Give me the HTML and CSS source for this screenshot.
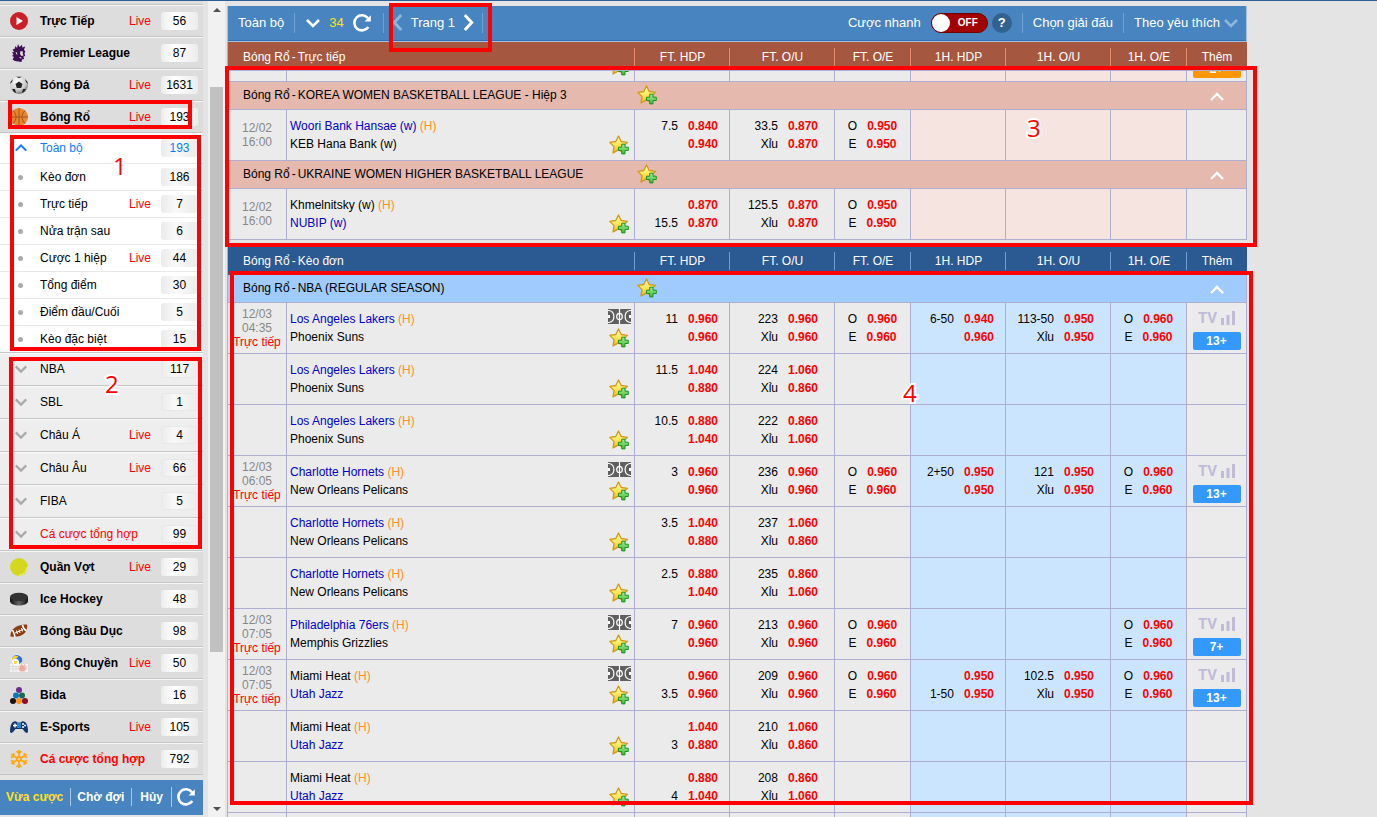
FILE: index.html
```html
<!DOCTYPE html>
<html lang="vi">
<head>
<meta charset="utf-8">
<meta name="viewport" content="width=device-width, initial-scale=1">
<title>Bóng Rổ</title>
<link rel="stylesheet" href="styles.css">
</head>
<body>
<svg class="defs" aria-hidden="true">
  <defs>
    <linearGradient id="gold" x1="0" y1="0" x2="0" y2="1"><stop offset="0" stop-color="#fffbd0"/><stop offset=".5" stop-color="#ffe65a"/><stop offset="1" stop-color="#f0b41c"/></linearGradient>
    <linearGradient id="leaf" x1="0" y1="0" x2="0" y2="1"><stop offset="0" stop-color="#a5ee94"/><stop offset="1" stop-color="#3fb83a"/></linearGradient>
    <linearGradient id="puck" x1="0" y1="0" x2="1" y2="0"><stop offset="0" stop-color="#111"/><stop offset=".5" stop-color="#666"/><stop offset="1" stop-color="#111"/></linearGradient>
    <radialGradient id="ball" cx=".4" cy=".3" r=".7"><stop offset="0" stop-color="#fff"/><stop offset=".7" stop-color="#ccc"/><stop offset="1" stop-color="#777"/></radialGradient>
  </defs>
  <symbol id="star" viewBox="0 0 20 20"><path d="M9.500 1l2.700 5.500 6.300.8-4.600 4.300 1 6.200-5.400-2.900L4 18l1-6.400L.8 7.400l6-.9z" fill="url(#gold)" stroke="#cf9a1c" stroke-width="1.300" stroke-linejoin="round"/><path d="M12.700 9.200h3.300v3h3.300v3.300H16v3.400h-3.300v-3.400H9.500v-3.300h3.200z" fill="url(#leaf)" stroke="#1f9226"/></symbol>
  <symbol id="court" viewBox="0 0 23 15"><path d="M0 0h23v15H0z" fill="#5f5f5f"/><g fill="none" stroke="#fff" stroke-width="1.200"><path d="M11.500 0v15M0 1.500h1c6.500 1 6.500 11 0 12H0M23 1.500h-1c-6.500 1-6.500 11 0 12h1"/><ellipse cx="11.500" cy="7.500" rx="2.800" ry="3.200"/></g><path d="M0 6h2v3H0zM21 6h2v3h-2z" fill="#fff"/></symbol>
  <symbol id="down" viewBox="0 0 16 10"><path d="M2 2l6 6 6-6" fill="none" stroke="currentColor" stroke-width="2.600"/></symbol>
  <symbol id="up" viewBox="0 0 16 10"><path d="M2 8l6-6 6 6" fill="none" stroke="currentColor" stroke-width="2.400"/></symbol>
  <symbol id="refresh" viewBox="0 0 20 20"><path d="M16 5.200A7.600 7.600 0 1 0 16.300 14" fill="none" stroke="currentColor" stroke-width="2.600"/><path d="M18.800 2.200v6.300h-6.300z" fill="currentColor"/></symbol>
  <symbol id="bars" viewBox="0 0 14 14"><path d="M0 7h3v7H0zM5.500 4h3v10h-3zM11 0h3v14h-3z" fill="currentColor"/></symbol>
</svg>

<div class="app">
  <aside class="sidebar">
    <nav class="menu">
      <a class="sport" href="#"><svg viewBox="0 0 18 18"><circle cx="9" cy="9" r="9" fill="#cb1f27"/><path d="M6.500 5l6.500 4-6.500 4z" fill="#fff"/></svg><span class="name">Trực Tiếp</span><span class="live">Live</span><span class="count">56</span></a>
      <a class="sport" href="#"><svg viewBox="0 0 18 18"><path d="M4.500 5l1-3 1.500 2L8 0l1.500 3L12 .8l.3 2.700 3-1L14 5.500l1.200 2-.7 2 .7 2.500-1.700.5.500 2.500-2 .5-.5 2.500L5 17l-2.500-1.500L4 13l-2-1 1.500-1.500L2 8.500 4 8 2.500 5.500z" fill="#3c1053"/><path d="M10.500 7l2.500.5-.3 2 .8 2-2 .5-1.500-2z" fill="#ddd"/><path d="M6 8l1 2.500M9.500 13.500l2 .5" stroke="#ddd"/></svg><span class="name">Premier League</span><span class="count">87</span></a>
      <a class="sport" href="#"><svg viewBox="0 0 18 18"><circle cx="9" cy="9" r="9" fill="url(#ball)"/><path d="M9 5.500l3.500 2.500-1.300 4H6.800L5.500 8zM6 .7L9 2l3-1.300zM0 8l2-2L3 3 .8 5.500zM18 8l-2-2-1-3 2.200 2.500zM2 13l3 0 1 4-2-1zM16 13l-3 0-1 4 2-1z" fill="#222"/></svg><span class="name">Bóng Đá</span><span class="live">Live</span><span class="count">1631</span></a>
      <a class="sport" href="#"><svg viewBox="0 0 18 18"><circle cx="9" cy="9" r="9" fill="#e8852f"/><path d="M9 0v18M0 9h18M3 2.500c4 4 4 9 0 13M15 2.500c-4 4-4 9 0 13" fill="none" stroke="#a4541a"/></svg><span class="name">Bóng Rổ</span><span class="live">Live</span><span class="count">193</span></a>

      <div class="bets">
        <a class="bet bet-all" href="#"><svg><use href="#up"/></svg><span class="name">Toàn bộ</span><span class="count">193</span></a>
        <a class="bet" href="#"><i class="dot"></i><span class="name">Kèo đơn</span><span class="count">186</span></a>
        <a class="bet" href="#"><i class="dot"></i><span class="name">Trực tiếp</span><span class="live">Live</span><span class="count">7</span></a>
        <a class="bet" href="#"><i class="dot"></i><span class="name">Nửa trận sau</span><span class="count">6</span></a>
        <a class="bet" href="#"><i class="dot"></i><span class="name">Cược 1 hiệp</span><span class="live">Live</span><span class="count">44</span></a>
        <a class="bet" href="#"><i class="dot"></i><span class="name">Tổng điểm</span><span class="count">30</span></a>
        <a class="bet" href="#"><i class="dot"></i><span class="name">Điểm đầu/Cuối</span><span class="count">5</span></a>
        <a class="bet" href="#"><i class="dot"></i><span class="name">Kèo đặc biệt</span><span class="count">15</span></a>
      </div>

      <a class="league-link" href="#"><svg><use href="#down"/></svg><span class="name">NBA</span><span class="count">117</span></a>
      <a class="league-link" href="#"><svg><use href="#down"/></svg><span class="name">SBL</span><span class="count">1</span></a>
      <a class="league-link" href="#"><svg><use href="#down"/></svg><span class="name">Châu Á</span><span class="live">Live</span><span class="count">4</span></a>
      <a class="league-link" href="#"><svg><use href="#down"/></svg><span class="name">Châu Âu</span><span class="live">Live</span><span class="count">66</span></a>
      <a class="league-link" href="#"><svg><use href="#down"/></svg><span class="name">FIBA</span><span class="count">5</span></a>
      <a class="league-link parlay" href="#"><svg><use href="#down"/></svg><span class="name">Cá cược tổng hợp</span><span class="count">99</span></a>

      <a class="sport" href="#"><svg viewBox="0 0 18 18"><circle cx="9" cy="9" r="9" fill="#d3d81d"/><path d="M17.500 9c-1 4.500-4 7.500-8.500 8.500" fill="none" stroke="#f2f4a0"/></svg><span class="name">Quần Vợt</span><span class="live">Live</span><span class="count">29</span></a>
      <a class="sport" href="#"><svg viewBox="0 0 18 18"><path d="M0 7v4c0 6 18 6 18 0V7z" fill="url(#puck)"/><ellipse cx="9" cy="7" rx="9" ry="4.200" fill="#333"/></svg><span class="name">Ice Hockey</span><span class="count">48</span></a>
      <a class="sport" href="#"><svg viewBox="0 0 18 18"><path d="M.5 14.500C0 8 6 2 17 2.500 18.500 10 12 16.500.5 14.500z" fill="#8a3f12"/><path d="M2.500 8c1 2 2 4 2.500 7M12.500 2.800c.5 3 2 5 4 6" fill="none" stroke="#fff" stroke-width="1.600"/><path d="M5 11l8-3.500M6.500 8.500l1 3.500M9 7.500l1 3.500M11.500 6l1 3.500" stroke="#fff"/></svg><span class="name">Bóng Bầu Dục</span><span class="count">98</span></a>
      <a class="sport" href="#"><svg viewBox="0 0 18 18"><path d="M0 10h18v8H0z" fill="#f4f4f4"/><path d="M0 12.500h18M0 15h18M3 10v8M6 10v8M15 10v8" stroke="#ccc" stroke-width=".6"/><circle cx="7" cy="6" r="5.500" fill="#fff"/><path d="M2 4C4 0 9 0 12 4c1 3 0 5-3 6 1-4-2-6-7-6z" fill="#2f6fe0"/><path d="M1.500 6.500c2-2 5-1.500 7-4-3-1.500-6-1-7 4zM4 10c2 .500 3-1 4-2.500L4 7z" fill="#ffcf2d"/><path d="M8 13l2 1-.5-4 1.500 2 .5-3 1.500 3 2-2-.5 4 2.500-1-3 4.500h-4z" fill="#f2a9a0"/></svg><span class="name">Bóng Chuyền</span><span class="live">Live</span><span class="count">50</span></a>
      <a class="sport" href="#"><svg viewBox="0 0 18 18"><circle cx="9" cy="4" r="3" fill="#6d2c8f"/><circle cx="6" cy="9.500" r="3" fill="#1474b8"/><circle cx="12" cy="9.500" r="3" fill="#1e6a4c"/><circle cx="3" cy="15" r="3" fill="#151515"/><circle cx="9" cy="15" r="3" fill="#f7941d"/><circle cx="15" cy="15" r="3" fill="#8d1020"/></svg><span class="name">Bida</span><span class="count">16</span></a>
      <a class="sport" href="#"><svg viewBox="0 0 18 18"><path d="M3 4c2-1.500 4-.5 4 .5h4c0-1 2-2 4-.5 2 1 3 6 3 9 0 2.500-2 2.500-3.500.5L12.500 11h-7L3.500 13.500C2 15.500 0 15.500 0 13 0 10 1 5 3 4z" fill="#12386b"/><path d="M7 5h4v5H7z" fill="#2e83cc"/><path d="M3 7.500h4M5 5.500v4" stroke="#fff" stroke-width="1.400"/><circle cx="13" cy="6" r="1" fill="#fff"/><circle cx="13" cy="9" r="1" fill="#fff"/><circle cx="15" cy="7.500" r="1" fill="#fff"/></svg><span class="name">E-Sports</span><span class="live">Live</span><span class="count">105</span></a>
      <a class="sport parlay" href="#"><svg viewBox="0 0 18 18"><path d="M9 0v18M1.200 4.500l15.600 9M16.800 4.500l-15.600 9M6.500 1L9 3.500 11.500 1M6.500 17L9 14.500l2.500 2.500M.8 7.500L4 6.500 3.500 3M17.200 7.500L14 6.500l.5-3.500M.8 10.500l3.200 1L3.500 15M17.200 10.500l-3.200 1 .5 3.500" fill="none" stroke="#ffa80f" stroke-width="1.700"/><circle cx="9" cy="9" r="3" fill="#ffa80f"/><circle cx="9" cy="9" r="1" fill="#ddd"/></svg><span class="name">Cá cược tổng hợp</span><span class="count">792</span></a>
    </nav>
    <div class="slip">
      <a class="recent" href="#">Vừa cược</a><a href="#">Chờ đợi</a><a href="#">Hủy</a><button type="button" aria-label="Tải lại"><svg><use href="#refresh"/></svg></button>
    </div>
  </aside>

  <div class="scroll" aria-hidden="true">
    <i class="arrow arrow-up"></i><i class="space-before"></i><i class="thumb"></i><i class="space-after"></i><i class="arrow arrow-down"></i>
  </div>

  <main class="odds">
    <header class="toolbar">
      <div class="tools all"><a href="#">Toàn bộ</a></div>
      <div class="tools reload"><button type="button" aria-label="Mở rộng"><svg class="chev"><use href="#down"/></svg></button><span class="timer">34</span><button type="button" aria-label="Tải lại"><svg class="ring"><use href="#refresh"/></svg></button></div>
      <div class="tools pager"><button class="dim" type="button" aria-label="Trang trước"><svg class="side" viewBox="0 0 10 16"><path d="M8.500 1L2 8l6.500 7" fill="none" stroke="currentColor" stroke-width="2.800"/></svg></button><span>Trang 1</span><button type="button" aria-label="Trang sau"><svg class="side" viewBox="0 0 10 16"><path d="M1.500 1L8 8l-6.500 7" fill="none" stroke="currentColor" stroke-width="2.800"/></svg></button></div>
      <div class="tools quick"><label for="quick">Cược nhanh</label><span class="switch"><input type="checkbox" id="quick"><span>OFF</span></span><button class="help" type="button">?</button></div>
      <div class="tools pick"><a href="#">Chọn giải đấu</a></div>
      <div class="tools fav"><a href="#">Theo yêu thích</a><svg class="chev dim"><use href="#down"/></svg></div>
    </header>

    <table class="grid live-grid">
      <colgroup><col class="c-time"><col><col class="c-hdp"><col class="c-ou"><col class="c-oe"><col class="c-hdp"><col class="c-ou"><col class="c-oe"><col class="c-more"></colgroup>
      <thead><tr><th class="title" colspan="2">Bóng Rổ<span class="dash">-</span>Trực tiếp</th><th>FT. HDP</th><th>FT. O/U</th><th>FT. O/E</th><th>1H. HDP</th><th>1H. O/U</th><th>1H. O/E</th><th>Thêm</th></tr></thead>
      <tbody>
        <tr class="cut"><td></td><td><div class="clip"><div class="marks"><button type="button" aria-label="Thêm yêu thích"><svg class="star"><use href="#star"/></svg></button></div></div></td><td></td><td></td><td></td><td class="half"></td><td class="half"></td><td class="half"></td><td><div class="clip"><div class="more"><button class="plus hot" type="button">2<b>+</b></button></div></div></td></tr>
        <tr class="league"><td colspan="2">Bóng Rổ<span class="dash">-</span>KOREA WOMEN BASKETBALL LEAGUE - Hiệp 3</td><td class="fav-cell" colspan="6"><button type="button" aria-label="Thêm yêu thích"><svg class="star"><use href="#star"/></svg></button></td><td class="fold"><button type="button" aria-label="Thu gọn"><svg class="chev"><use href="#up"/></svg></button></td></tr>
        <tr><td class="time">12/02<br>16:00</td><td><div class="match"><div class="teams"><p><span class="fave">Woori Bank Hansae (w)</span> <em>(H)</em></p><p>KEB Hana Bank (w)</p></div><div class="marks"><button type="button" aria-label="Thêm yêu thích"><svg class="star"><use href="#star"/></svg></button></div></div></td><td class="hdp"><p>7.5<b>0.840</b></p><p><b>0.940</b></p></td><td class="ou"><p>33.5<b>0.870</b></p><p>Xỉu<b>0.870</b></p></td><td class="oe"><p>O<b>0.950</b></p><p>E<b>0.950</b></p></td><td class="half"></td><td class="half"></td><td class="half"></td><td></td></tr>
        <tr class="league"><td colspan="2">Bóng Rổ<span class="dash">-</span>UKRAINE WOMEN HIGHER BASKETBALL LEAGUE</td><td class="fav-cell" colspan="6"><button type="button" aria-label="Thêm yêu thích"><svg class="star"><use href="#star"/></svg></button></td><td class="fold"><button type="button" aria-label="Thu gọn"><svg class="chev"><use href="#up"/></svg></button></td></tr>
        <tr><td class="time">12/02<br>16:00</td><td><div class="match"><div class="teams"><p>Khmelnitsky (w) <em>(H)</em></p><p><span class="fave">NUBIP (w)</span></p></div><div class="marks"><button type="button" aria-label="Thêm yêu thích"><svg class="star"><use href="#star"/></svg></button></div></div></td><td class="hdp"><p><b>0.870</b></p><p>15.5<b>0.870</b></p></td><td class="ou"><p>125.5<b>0.870</b></p><p>Xỉu<b>0.870</b></p></td><td class="oe"><p>O<b>0.950</b></p><p>E<b>0.950</b></p></td><td class="half"></td><td class="half"></td><td class="half"></td><td></td></tr>
      </tbody>
    </table>

    <table class="grid early-grid">
      <colgroup><col class="c-time"><col><col class="c-hdp"><col class="c-ou"><col class="c-oe"><col class="c-hdp"><col class="c-ou"><col class="c-oe"><col class="c-more"></colgroup>
      <thead><tr><th class="title" colspan="2">Bóng Rổ<span class="dash">-</span>Kèo đơn</th><th>FT. HDP</th><th>FT. O/U</th><th>FT. O/E</th><th>1H. HDP</th><th>1H. O/U</th><th>1H. O/E</th><th>Thêm</th></tr></thead>
      <tbody>
        <tr class="league"><td colspan="2">Bóng Rổ<span class="dash">-</span>NBA (REGULAR SEASON)</td><td class="fav-cell" colspan="6"><button type="button" aria-label="Thêm yêu thích"><svg class="star"><use href="#star"/></svg></button></td><td class="fold"><button type="button" aria-label="Thu gọn"><svg class="chev"><use href="#up"/></svg></button></td></tr>
        <tr><td class="time">12/03<br>04:35<br><span>Trực tiếp</span></td><td><div class="match"><div class="teams"><p><span class="fave">Los Angeles Lakers</span> <em>(H)</em></p><p>Phoenix Suns</p></div><div class="marks"><svg class="court"><use href="#court"/></svg><button type="button" aria-label="Thêm yêu thích"><svg class="star"><use href="#star"/></svg></button></div></div></td><td class="hdp"><p>11<b>0.960</b></p><p><b>0.960</b></p></td><td class="ou"><p>223<b>0.960</b></p><p>Xỉu<b>0.960</b></p></td><td class="oe"><p>O<b>0.960</b></p><p>E<b>0.960</b></p></td><td class="half hdp"><p>6-50<b>0.940</b></p><p><b>0.960</b></p></td><td class="half ou"><p>113-50<b>0.950</b></p><p>Xỉu<b>0.950</b></p></td><td class="half oe"><p>O<b>0.960</b></p><p>E<b>0.960</b></p></td><td><div class="more"><span class="tv">TV<svg><use href="#bars"/></svg></span><button class="plus" type="button">13<b>+</b></button></div></td></tr>
        <tr><td></td><td><div class="match"><div class="teams"><p><span class="fave">Los Angeles Lakers</span> <em>(H)</em></p><p>Phoenix Suns</p></div><div class="marks"><button type="button" aria-label="Thêm yêu thích"><svg class="star"><use href="#star"/></svg></button></div></div></td><td class="hdp"><p>11.5<b>1.040</b></p><p><b>0.880</b></p></td><td class="ou"><p>224<b>1.060</b></p><p>Xỉu<b>0.860</b></p></td><td></td><td class="half"></td><td class="half"></td><td class="half"></td><td></td></tr>
        <tr><td></td><td><div class="match"><div class="teams"><p><span class="fave">Los Angeles Lakers</span> <em>(H)</em></p><p>Phoenix Suns</p></div><div class="marks"><button type="button" aria-label="Thêm yêu thích"><svg class="star"><use href="#star"/></svg></button></div></div></td><td class="hdp"><p>10.5<b>0.880</b></p><p><b>1.040</b></p></td><td class="ou"><p>222<b>0.860</b></p><p>Xỉu<b>1.060</b></p></td><td></td><td class="half"></td><td class="half"></td><td class="half"></td><td></td></tr>
        <tr><td class="time">12/03<br>06:05<br><span>Trực tiếp</span></td><td><div class="match"><div class="teams"><p><span class="fave">Charlotte Hornets</span> <em>(H)</em></p><p>New Orleans Pelicans</p></div><div class="marks"><svg class="court"><use href="#court"/></svg><button type="button" aria-label="Thêm yêu thích"><svg class="star"><use href="#star"/></svg></button></div></div></td><td class="hdp"><p>3<b>0.960</b></p><p><b>0.960</b></p></td><td class="ou"><p>236<b>0.960</b></p><p>Xỉu<b>0.960</b></p></td><td class="oe"><p>O<b>0.960</b></p><p>E<b>0.960</b></p></td><td class="half hdp"><p>2+50<b>0.950</b></p><p><b>0.950</b></p></td><td class="half ou"><p>121<b>0.950</b></p><p>Xỉu<b>0.950</b></p></td><td class="half oe"><p>O<b>0.960</b></p><p>E<b>0.960</b></p></td><td><div class="more"><span class="tv">TV<svg><use href="#bars"/></svg></span><button class="plus" type="button">13<b>+</b></button></div></td></tr>
        <tr><td></td><td><div class="match"><div class="teams"><p><span class="fave">Charlotte Hornets</span> <em>(H)</em></p><p>New Orleans Pelicans</p></div><div class="marks"><button type="button" aria-label="Thêm yêu thích"><svg class="star"><use href="#star"/></svg></button></div></div></td><td class="hdp"><p>3.5<b>1.040</b></p><p><b>0.880</b></p></td><td class="ou"><p>237<b>1.060</b></p><p>Xỉu<b>0.860</b></p></td><td></td><td class="half"></td><td class="half"></td><td class="half"></td><td></td></tr>
        <tr><td></td><td><div class="match"><div class="teams"><p><span class="fave">Charlotte Hornets</span> <em>(H)</em></p><p>New Orleans Pelicans</p></div><div class="marks"><button type="button" aria-label="Thêm yêu thích"><svg class="star"><use href="#star"/></svg></button></div></div></td><td class="hdp"><p>2.5<b>0.880</b></p><p><b>1.040</b></p></td><td class="ou"><p>235<b>0.860</b></p><p>Xỉu<b>1.060</b></p></td><td></td><td class="half"></td><td class="half"></td><td class="half"></td><td></td></tr>
        <tr><td class="time">12/03<br>07:05<br><span>Trực tiếp</span></td><td><div class="match"><div class="teams"><p><span class="fave">Philadelphia 76ers</span> <em>(H)</em></p><p>Memphis Grizzlies</p></div><div class="marks"><svg class="court"><use href="#court"/></svg><button type="button" aria-label="Thêm yêu thích"><svg class="star"><use href="#star"/></svg></button></div></div></td><td class="hdp"><p>7<b>0.960</b></p><p><b>0.960</b></p></td><td class="ou"><p>213<b>0.960</b></p><p>Xỉu<b>0.960</b></p></td><td class="oe"><p>O<b>0.960</b></p><p>E<b>0.960</b></p></td><td class="half"></td><td class="half"></td><td class="half oe"><p>O<b>0.960</b></p><p>E<b>0.960</b></p></td><td><div class="more"><span class="tv">TV<svg><use href="#bars"/></svg></span><button class="plus" type="button">7<b>+</b></button></div></td></tr>
        <tr><td class="time">12/03<br>07:05<br><span>Trực tiếp</span></td><td><div class="match"><div class="teams"><p>Miami Heat <em>(H)</em></p><p><span class="fave">Utah Jazz</span></p></div><div class="marks"><svg class="court"><use href="#court"/></svg><button type="button" aria-label="Thêm yêu thích"><svg class="star"><use href="#star"/></svg></button></div></div></td><td class="hdp"><p><b>0.960</b></p><p>3.5<b>0.960</b></p></td><td class="ou"><p>209<b>0.960</b></p><p>Xỉu<b>0.960</b></p></td><td class="oe"><p>O<b>0.960</b></p><p>E<b>0.960</b></p></td><td class="half hdp"><p><b>0.950</b></p><p>1-50<b>0.950</b></p></td><td class="half ou"><p>102.5<b>0.950</b></p><p>Xỉu<b>0.950</b></p></td><td class="half oe"><p>O<b>0.960</b></p><p>E<b>0.960</b></p></td><td><div class="more"><span class="tv">TV<svg><use href="#bars"/></svg></span><button class="plus" type="button">13<b>+</b></button></div></td></tr>
        <tr><td></td><td><div class="match"><div class="teams"><p>Miami Heat <em>(H)</em></p><p><span class="fave">Utah Jazz</span></p></div><div class="marks"><button type="button" aria-label="Thêm yêu thích"><svg class="star"><use href="#star"/></svg></button></div></div></td><td class="hdp"><p><b>1.040</b></p><p>3<b>0.880</b></p></td><td class="ou"><p>210<b>1.060</b></p><p>Xỉu<b>0.860</b></p></td><td></td><td class="half"></td><td class="half"></td><td class="half"></td><td></td></tr>
        <tr><td></td><td><div class="match"><div class="teams"><p>Miami Heat <em>(H)</em></p><p><span class="fave">Utah Jazz</span></p></div><div class="marks"><button type="button" aria-label="Thêm yêu thích"><svg class="star"><use href="#star"/></svg></button></div></div></td><td class="hdp"><p><b>0.880</b></p><p>4<b>1.040</b></p></td><td class="ou"><p>208<b>0.860</b></p><p>Xỉu<b>1.060</b></p></td><td></td><td class="half"></td><td class="half"></td><td class="half"></td><td></td></tr>
        <tr><td></td><td></td><td></td><td></td><td></td><td class="half"></td><td class="half"></td><td class="half"></td><td></td></tr>
      </tbody>
    </table>
  </main>
</div>

<div class="frame frame-sport"></div>
<div class="frame frame-bets"></div>
<div class="frame frame-leagues"></div>
<div class="frame frame-pager"></div>
<div class="frame frame-live"></div>
<div class="frame frame-early"></div>
<span class="mark mark-1">1</span>
<span class="mark mark-2">2</span>
<span class="mark mark-3">3</span>
<span class="mark mark-4">4</span>
</body>
</html>
```

FILE: styles.css
```css
* { box-sizing: border-box; }

body {
  margin: 0;
  height: 100vh;
  overflow: hidden;
  position: relative;
  border-top: 1px solid #2d5f99;
  background: #e4e4e4;
  color: #000;
  font: 12px/18px "Liberation Sans", Arial, sans-serif;
}

p { margin: 0; }
a { color: inherit; text-decoration: none; }
button {
  margin: 0;
  padding: 0;
  border: 0;
  background: none;
  color: inherit;
  font: inherit;
  cursor: pointer;
}
svg { display: block; flex: none; }
.defs { position: absolute; width: 0; height: 0; }

.app { display: flex; height: 100%; overflow: hidden; }

/* Sidebar */
.sidebar { flex: none; width: 203px; margin-right: 5px; }
.menu { padding-top: 4px; background: #ddd; margin-bottom: 5px; }
.sport, .bet, .league-link {
  display: flex;
  align-items: center;
  padding: 0 5px 0 10px;
}
.sport {
  height: 32px;
  border-top: 1px solid #f6f6f6;
  border-bottom: 1px solid #c6c6c6;
  font-weight: bold;
}
.sport:first-child { box-shadow: 0 -1px 0 #c6c6c6; }
.sport svg { width: 18px; height: 18px; margin-right: 12px; }
.name { flex: 1; white-space: nowrap; }
.live { width: 32px; color: #f00; font-weight: normal; }
.count {
  width: 37px;
  height: 18px;
  border-radius: 3px;
  background: linear-gradient(90deg, #ececec, #fff 35%, #ececec);
  font-weight: normal;
  text-align: center;
  color: #000;
}
.bets { background: #fff; }
.bet { height: 27px; border-bottom: 1px solid #e8e8e8; }
.bet-all { height: 31px; color: #0a7cff; }
.bet:last-child { border-bottom-color: #c6c6c6; }
.bet-all svg, .league-link svg { width: 14px; height: 10px; margin: 0 12px 0 4px; }
.bet .count { background: linear-gradient(90deg, #ebebeb, #f9f9f9 40%, #ebebeb); }
.bet-all .count { color: inherit; }
.dot {
  width: 5px;
  height: 5px;
  margin: 1px 17px 0 8px;
  border-radius: 50%;
  background: #aaa;
}
.league-link {
  height: 33px;
  padding-bottom: 2px;
  border-top: 1px solid #fafafa;
  border-bottom: 1px solid #c6c6c6;
  background: #eee;
}
.league-link svg { color: #aaa; }
.league-link .count {
  background: linear-gradient(90deg, #ebebeb, #f8f8f8 35%, #ebebeb);
  box-shadow: inset 0 0 0 1px #e8e8e8;
}
.parlay .name { color: #f00; }

.slip {
  display: flex;
  align-items: center;
  height: 35px;
  padding: 0 0 2px 6px;
  background: #4884bf;
  color: #fff;
  font-weight: bold;
}
.slip > * + * { border-left: 1px solid #a9c6e2; }
.slip a { padding-right: 7px; }
.slip a + a { padding-left: 6px; }
.slip a:nth-child(3) { padding: 0 8px; }
.slip .recent { color: #ffe11a; }
.slip button { padding-left: 4px; }
.slip svg { width: 20px; height: 20px; }

/* Scroll bar */
.scroll {
  flex: none;
  display: flex;
  flex-direction: column;
  align-items: center;
  width: 17px;
  background: #f1f1f1;
}
.arrow { margin: 7px 0 6px; border: 4px solid transparent; border-top-width: 0; border-bottom-width: 0; }
.arrow-up { border-bottom: 4px solid #505050; }
.arrow-down { border-top: 4px solid #505050; }
.space-before { flex: 69; }
.thumb { flex: 565; width: 13px; background: #c1c1c1; }
.space-after { flex: 148; }

/* Odds */
.odds { flex: 1; max-width: 1020px; margin: 5px 8px 0 2px; }

.toolbar {
  display: flex;
  align-items: center;
  height: 36px;
  padding-bottom: 2px;
  border: solid #a9bfe0;
  border-width: 0 1px 1px;
  background: #4884bf;
  box-shadow: inset 0 -1px 0 #2d70b4;
  color: #fff;
  font-size: 13px;
}
.tools { display: flex; align-items: center; height: 20px; white-space: nowrap; }
.tools + .tools { border-left: 1px solid #6fa0d0; }
.all { padding: 0 10px; }
.reload { gap: 8px; padding: 0 11px 0 10px; }
.timer { color: #ffe11a; }
.pager { gap: 8px; padding: 0 8px; }
.pager + .quick { border-left: 0; }
.toolbar .pager { border-right: 1px solid #6fa0d0; }
.toolbar .quick { margin-left: auto; gap: 4px; padding-right: 10px; border-left: 0; }
.quick label { margin-right: 6px; }
.pick { padding: 0 10px; }
.fav { gap: 3px; padding: 0 7px 0 10px; }
.chev { width: 16px; height: 10px; }
.ring { width: 20px; height: 20px; }
.side { width: 11px; height: 17px; }
.dim { color: #8fb6dd; }
.switch {
  display: flex;
  align-items: center;
  gap: 8px;
  width: 57px;
  height: 20px;
  border: 1px solid #6d0000;
  border-radius: 10px;
  background: #a30000;
  font-size: 10px;
  font-weight: bold;
}
.switch input {
  appearance: none;
  width: 18px;
  height: 18px;
  margin: 0;
  border-radius: 50%;
  background: #fff;
}
.help { width: 20px; height: 20px; border-radius: 50%; background: #32628f; font-weight: bold; }

.grid {
  width: 100%;
  table-layout: fixed;
  border-collapse: separate;
  border-spacing: 0;
  border-left: 1px solid #aeaed0;
}
.early-grid { margin-top: 7px; }
.c-time { width: 59px; }
.c-hdp { width: 95px; }
.c-ou { width: 105px; }
.c-oe { width: 76px; }
.c-more { width: 60px; }

th {
  height: 28px;
  padding: 0;
  color: #fff;
  font-weight: normal;
  background: linear-gradient(#e88a6e, #e88a6e) 100% 6px / 1px 18px no-repeat #a5573f;
}
.live-grid th { height: 29px; padding-top: 2px; border-bottom: 1px solid #aeaed0; }
.early-grid th { background: linear-gradient(#6f9fd8, #6f9fd8) 100% 5px / 1px 18px no-repeat #2b5a92; }
.live-grid th:last-child { background: #a5573f; }
.early-grid th:last-child { background: #2b5a92; }
th.title { padding-left: 15px; text-align: left; }
.dash { margin: 0 2px; }

td {
  height: 51px;
  padding: 0;
  border: solid #aeaed0;
  border-width: 0 1px 1px 0;
  background: #ebebeb;
}
.live-grid .half { background: #f6e4e0; }
.early-grid .half { background: #cce5ff; }

.league td { height: 28px; padding-bottom: 2px; border-right: 0; background: #e5b9ae; }
.early-grid .league td { background: #9fcbff; }
.league td:first-child { padding-left: 15px; }
.league td:last-child { border-right: 1px solid #aeaed0; }
td.fav-cell { padding-left: 2px; }
.fav-cell button, .fold button { display: block; }
.fold button { margin: 5px auto 0; color: #fff; }

.cut td { height: 11px; }
.clip { display: flex; flex-direction: column; justify-content: flex-end; height: 10px; overflow: hidden; }
.clip .marks { align-self: flex-end; }
.clip > div { flex: none; }

.time { color: #888; line-height: 14px; text-align: center; }
.time span { color: #f00; white-space: nowrap; }
.match { display: flex; align-items: center; }
.teams { flex: 1; padding-left: 3px; }
.fave { color: #00c; }
em { color: #ff9020; font-style: normal; }
.marks {
  display: flex;
  flex-direction: column;
  align-items: center;
  justify-content: flex-end;
  gap: 4px;
  width: 30px;
  height: 50px;
  padding-bottom: 5px;
}
.star { width: 20px; height: 20px; }
.court { width: 23px; height: 15px; }

.hdp p, .ou p, .oe p { display: flex; justify-content: flex-end; gap: 10px; }
.hdp { padding-right: 11px; }
.ou { padding-right: 16px; }
.oe p { justify-content: center; }
td b { color: #f00; }

.more {
  display: flex;
  flex-direction: column;
  align-items: center;
  justify-content: flex-end;
  gap: 5px;
  height: 50px;
  padding-bottom: 3px;
}
.tv { display: flex; align-items: center; gap: 4px; color: #c0bcd8; font: bold 15px/18px Roboto, sans-serif; }
.tv svg { width: 14px; height: 14px; }
.plus { width: 48px; height: 18px; border-radius: 2px; background: #39f; color: #fff; font-weight: bold; }
.plus b { color: #fff; font-weight: 900; }
.hot { background: #ff9600; }

/* Numbered call-outs over the page */
.frame { position: absolute; border: 4px solid #f00; pointer-events: none; }
.frame-sport { left: 8px; top: 99px; width: 184px; height: 29px; }
.frame-bets { left: 10px; top: 134px; width: 191px; height: 216px; }
.frame-leagues { left: 9px; top: 356px; width: 193px; height: 192px; }
.frame-pager { left: 389px; top: 2px; width: 103px; height: 49px; }
.frame-live { left: 225px; top: 65px; width: 1032px; height: 181px; }
.frame-early { left: 230px; top: 270px; width: 1023px; height: 534px; }
.mark {
  position: absolute;
  color: #f00;
  font: 24px/24px "Open Sans", sans-serif;
  -webkit-text-stroke: 4px #fff;
  paint-order: stroke fill;
}
.mark-1 { left: 113px; top: 153px; }
.mark-2 { left: 105px; top: 371px; }
.mark-3 { left: 1027px; top: 115px; }
.mark-4 { left: 903px; top: 380px; }
```
